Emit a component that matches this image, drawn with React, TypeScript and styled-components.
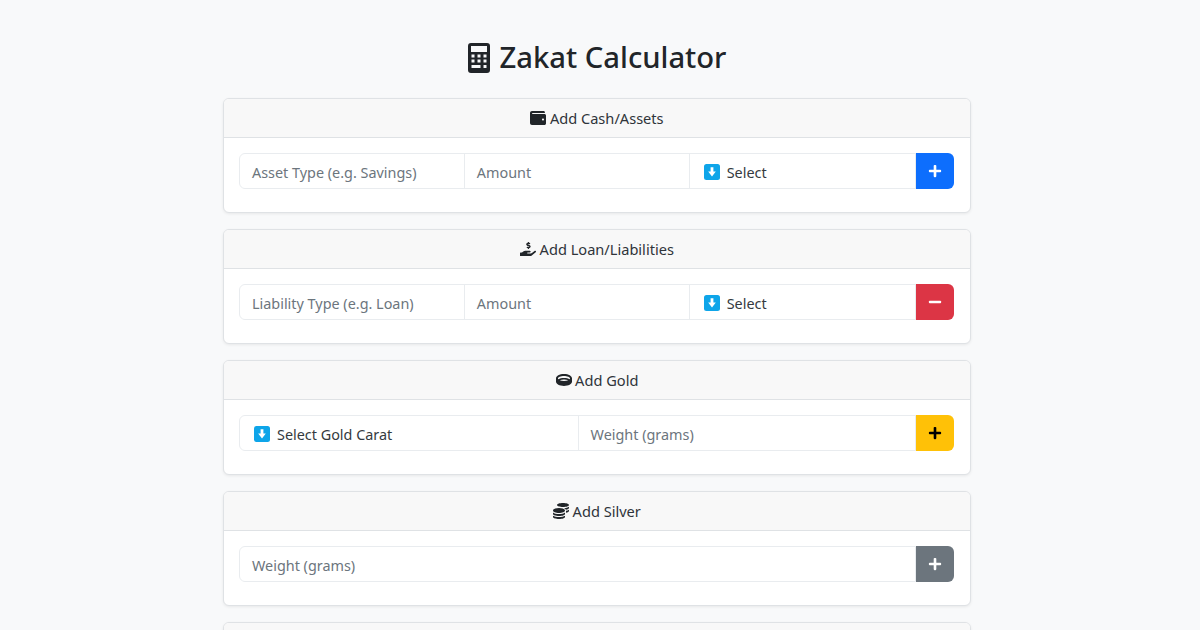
import React from 'react';
import styled, { createGlobalStyle } from 'styled-components';
import { FaWallet, FaHandHoldingUsd, FaRing, FaCoins, FaPlus, FaMinus } from 'react-icons/fa';

const GlobalStyle = createGlobalStyle`
  html, body {
    margin: 0;
    padding: 0;
    background: #f8f9fa;
    color: #212529;
    font-family: "Noto Sans", "Open Sans", sans-serif;
    font-size: 15px;
    overflow: hidden;
  }
  * { box-sizing: border-box; }
`;

const Page = styled.div`
  width: 748px;
  margin-left: 223px;
  padding-top: 38px;
`;

const Title = styled.h1`
  margin: 0 0 21px;
  height: 39px;
  display: flex;
  align-items: center;
  justify-content: center;
  gap: 10px;
  font-size: 29.2px;
  font-weight: 500;
  line-height: 39px;
  color: #212529;
`;

const Card = styled.section`
  background: #fff;
  border: 1px solid #dfe2e5;
  border-radius: 6px;
  box-shadow: 0 1px 3px rgba(0, 0, 0, 0.07);
  margin-bottom: 16px;
  overflow: hidden;
`;

const CardHeader = styled.header`
  height: 39px;
  display: flex;
  align-items: center;
  justify-content: center;
  gap: 3.5px;
  background: #f8f8f8;
  border-bottom: 1px solid #dfe2e5;
  font-size: 14.6px;
  color: #2f343a;
  svg { width: 16px; height: 16px; color: #212529; }
`;

const CardBody = styled.div`
  padding: 15px 16px 23px 15px;
`;

const InputGroup = styled.div`
  display: flex;
  height: 36px;
`;

const Field = styled.div`
  flex: 1 1 100%;
  min-width: 0;
  display: flex;
  align-items: center;
  padding: 2px 12px 0;
  border: 1px solid #e9ecef;
  margin-left: -1px;
  font-size: 14.4px;
  color: #6c757d;
  white-space: nowrap;
  &:first-child {
    margin-left: 0;
    border-radius: 6px 0 0 6px;
  }
`;

const SelectField = styled(Field)`
  gap: 7px;
  padding-left: 14px;
  color: #343a40;
`;

const AddButton = styled.button<{ $bg: string; $fg?: string }>`
  flex: 0 0 38px;
  display: flex;
  align-items: center;
  justify-content: center;
  padding: 0;
  border: none;
  border-radius: 0 6px 6px 0;
  background: ${p => p.$bg};
  color: ${p => p.$fg || '#fff'};
  svg { width: 14px; height: 14px; }
`;

const CalculatorIcon = () => (
  <svg width="22" height="30" viewBox="0 0 22 30" aria-hidden="true">
    <path
      fillRule="evenodd"
      fill="#212529"
      d="M3 0h16a3 3 0 0 1 3 3v24a3 3 0 0 1-3 3H3a3 3 0 0 1-3-3V3a3 3 0 0 1 3-3z
         M3 3v6h16V3z
         M3.5 11.5v3h3v-3z M9.5 11.5v3h3v-3z M15.5 11.5v3h3v-3z
         M3.5 16.5v3h3v-3z M9.5 16.5v3h3v-3z M15.5 16.5v3h3v-3z
         M3.5 22v3h9v-3z M15.5 22v3h3v-3z"
    />
  </svg>
);

const DownEmoji = () => (
  <svg width="16" height="16" viewBox="0 0 16 16" aria-hidden="true">
    <rect x="0" y="0" width="16" height="16" rx="2.5" fill="#0ea5e9" />
    <path d="M6.6 3.2h2.8v4.4h2.4L8 12.4 4.2 7.6h2.4z" fill="#fff" />
  </svg>
);

const App: React.FC = () => (
  <>
    <GlobalStyle />
    <Page>
      <Title><CalculatorIcon /> Zakat Calculator</Title>

      <Card>
        <CardHeader><FaWallet /> Add Cash/Assets</CardHeader>
        <CardBody>
          <InputGroup>
            <Field>Asset Type (e.g. Savings)</Field>
            <Field>Amount</Field>
            <SelectField><DownEmoji /> Select</SelectField>
            <AddButton $bg="#0d6efd"><FaPlus /></AddButton>
          </InputGroup>
        </CardBody>
      </Card>

      <Card>
        <CardHeader><FaHandHoldingUsd /> Add Loan/Liabilities</CardHeader>
        <CardBody>
          <InputGroup>
            <Field>Liability Type (e.g. Loan)</Field>
            <Field>Amount</Field>
            <SelectField><DownEmoji /> Select</SelectField>
            <AddButton $bg="#dc3545"><FaMinus /></AddButton>
          </InputGroup>
        </CardBody>
      </Card>

      <Card>
        <CardHeader><FaRing /> Add Gold</CardHeader>
        <CardBody>
          <InputGroup>
            <SelectField><DownEmoji /> Select Gold Carat</SelectField>
            <Field>Weight (grams)</Field>
            <AddButton $bg="#ffc107" $fg="#000"><FaPlus /></AddButton>
          </InputGroup>
        </CardBody>
      </Card>

      <Card>
        <CardHeader><FaCoins /> Add Silver</CardHeader>
        <CardBody>
          <InputGroup>
            <Field>Weight (grams)</Field>
            <AddButton $bg="#6c757d"><FaPlus /></AddButton>
          </InputGroup>
        </CardBody>
      </Card>

      <Card>
        <CardHeader />
      </Card>
    </Page>
  </>
);

export default App;
